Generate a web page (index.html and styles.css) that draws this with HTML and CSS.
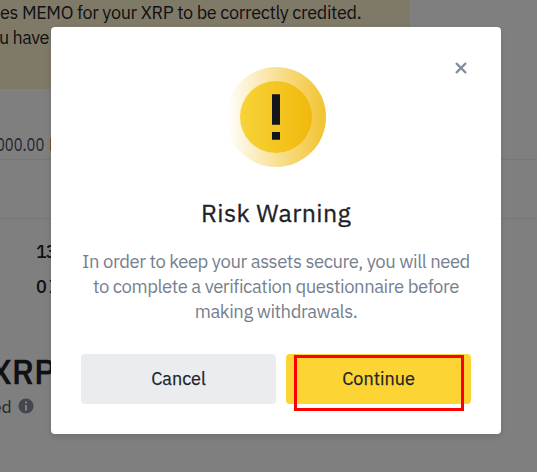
FILE: index.html
```html
<!DOCTYPE html>
<html lang="en">
<head>
    <meta charset="UTF-8">
    <meta name="viewport" content="width=device-width, initial-scale=1.0">
    <title>Risk Warning</title>
    <link rel="stylesheet" href="styles.css">
</head>
<body>
    <div class="page">
        <div class="notice">
            <div class="notice-first">es MEMO for your XRP to be correctly credited.</div>
            <div class="notice-second">u have</div>
        </div>
        <div class="amount"><span>000.00</span><i class="amount-divider"></i></div>
        <div class="spacer"></div>
        <div class="fees">
            <div class="fee">13</div>
            <div class="fee">0 X</div>
        </div>
        <div class="total">XRP</div>
        <div class="hint">
            <span>ed</span>
            <svg class="info" viewBox="0 0 16 16">
                <circle cx="8" cy="8" r="7.6" fill="#848e9c"/>
                <path d="M7 3.6h2v2H7zM7 7h2v5.4H7z" fill="#fff"/>
            </svg>
        </div>
    </div>

    <div class="overlay">
        <div class="modal">
            <button class="close" aria-label="Close">
                <svg viewBox="0 0 12 12">
                    <path d="M1.6 1.6l8.8 8.8M10.4 1.6l-8.8 8.8" stroke="#848e9c" stroke-width="2.2" stroke-linecap="round"/>
                </svg>
            </button>
            <svg class="warning" viewBox="0 0 100 100">
                <defs>
                    <linearGradient id="ring" x1="0" y1="0" x2="1" y2="0">
                        <stop offset="0" stop-color="#f0b90b" stop-opacity="0"/>
                        <stop offset="1" stop-color="#f0b90b" stop-opacity=".86"/>
                    </linearGradient>
                    <linearGradient id="disc" x1="0" y1="0" x2="1" y2="0">
                        <stop offset="0" stop-color="#f8d33a"/>
                        <stop offset="1" stop-color="#f0b90b"/>
                    </linearGradient>
                </defs>
                <circle cx="50" cy="50" r="50" fill="url(#ring)"/>
                <circle cx="50" cy="50" r="36" fill="url(#disc)"/>
                <path d="M46 27.3h8v30.4h-8zM46 65h8v7.7h-8z" fill="#14151a"/>
            </svg>
            <h1 class="title">Risk Warning</h1>
            <div class="message">
                <div class="line-one">In order to keep your assets secure, you will need</div>
                <div class="line-two">to complete a verification questionnaire before</div>
                <div class="line-three">making withdrawals.</div>
            </div>
            <div class="actions">
                <button class="btn cancel">Cancel</button>
                <button class="btn continue">Continue</button>
            </div>
            <div class="highlight"></div>
        </div>
    </div>
</body>
</html>
```
FILE: styles.css
```css
* {
    box-sizing: border-box;
}

body {
    margin: 0;
    height: 472px;
    overflow: hidden;
    background: #fff;
    color: #1e2329;
    font-family: "IBM Plex Sans", Roboto, "Liberation Sans", sans-serif;
}

.page {
    height: 472px;
    overflow: hidden;
    white-space: nowrap;
}

.notice {
    width: 410px;
    height: 89px;
    background: #fef3d0;
    font-size: 18px;
    line-height: 25px;
    letter-spacing: -0.33px;
}

.notice-second {
    margin-left: -1px;
    letter-spacing: -0.5px;
}

.amount {
    display: flex;
    align-items: center;
    height: 71px;
    padding-top: 41px;
    border-bottom: 1px solid #eaecef;
    color: #474d57;
    font-size: 18px;
}

.amount span {
    margin-left: -4px;
    transform: scaleX(0.82);
    transform-origin: left;
}

.amount-divider {
    width: 1px;
    height: 13px;
    margin-left: -5px;
    background: #f0a040;
}

.spacer {
    height: 59px;
    border-bottom: 1px solid #eaecef;
}

.fees {
    padding: 15px 0 0 36px;
    font-size: 18px;
    font-weight: 500;
    line-height: 35px;
    letter-spacing: -1px;
}

.total {
    height: 50px;
    margin: 42px 0 0 -10px;
    font-size: 34px;
    font-weight: 500;
    line-height: 50px;
    -webkit-text-stroke: 0.3px #1e2329;
}

.hint {
    display: flex;
    align-items: center;
    height: 20px;
    margin-left: -8px;
    color: #474d57;
    font-size: 17.5px;
}

.info {
    width: 16px;
    height: 16px;
    margin-left: 6px;
}

.overlay {
    position: absolute;
    top: 0;
    left: 0;
    width: 537px;
    height: 472px;
    padding: 27px 36px 38px 51px;
    background: rgba(0, 0, 0, 0.5);
}

.modal {
    position: relative;
    display: flex;
    flex-direction: column;
    align-items: center;
    height: 407px;
    padding: 40px 30px 30px;
    border-radius: 4px;
    background: #fff;
    box-shadow: 0 3px 6px rgba(0, 0, 0, 0.12);
}

.close {
    position: absolute;
    top: 35px;
    right: 34px;
    width: 12px;
    height: 12px;
    padding: 0;
    border: none;
    background: none;
}

.close svg {
    display: block;
}

.warning {
    width: 100px;
    height: 100px;
}

.title {
    height: 34px;
    margin: 29px 0 0;
    font-size: 25px;
    font-weight: 400;
    line-height: 34px;
    letter-spacing: 0.35px;
    -webkit-text-stroke: 0.3px #1e2329;
}

.message {
    margin-top: 19px;
    color: #76808f;
    font-size: 18.5px;
    line-height: 25px;
    letter-spacing: -0.45px;
    text-align: center;
    white-space: nowrap;
}

.actions {
    display: flex;
    gap: 10px;
    width: 390px;
    margin-top: 30px;
}

.btn {
    height: 50px;
    padding: 0 0 2px;
    border: none;
    border-radius: 4px;
    color: #1e2329;
    font-family: inherit;
    font-size: 18px;
    font-weight: 400;
    -webkit-text-stroke: 0.25px #1e2329;
}

.cancel {
    width: 195px;
    background: #eaecef;
}

.continue {
    width: 185px;
    background: #fcd535;
}

.highlight {
    position: absolute;
    top: 328px;
    left: 243px;
    width: 170px;
    height: 56px;
    border: 3px solid #f00;
}
```
